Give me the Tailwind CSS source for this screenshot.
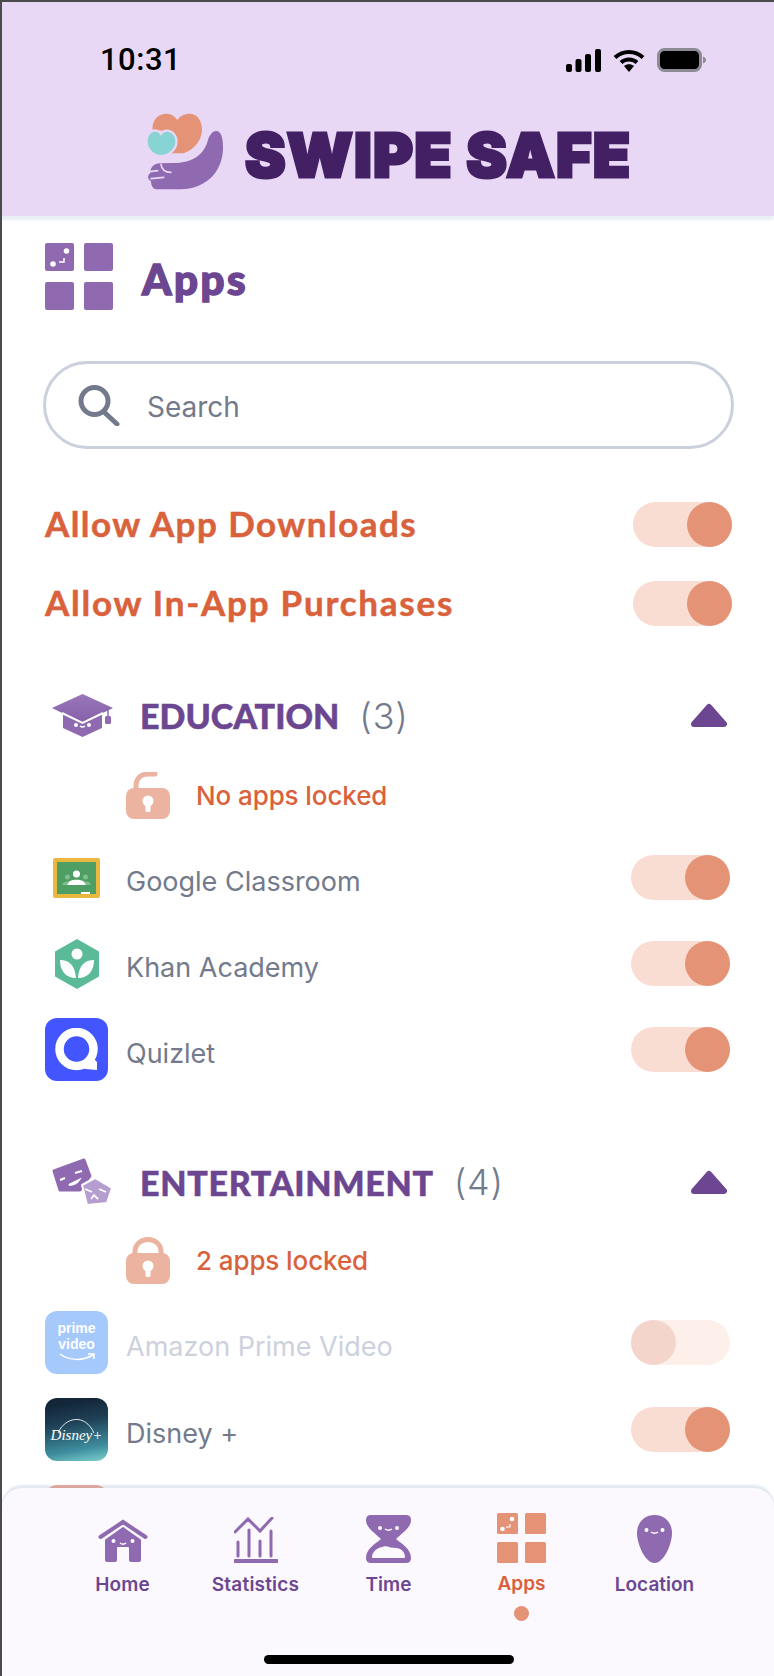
<!DOCTYPE html>
<html lang="en">
<head>
<meta charset="utf-8">
<title>Swipe Safe – Apps</title>
<script src="https://cdn.jsdelivr.net/npm/@tailwindcss/browser@4"></script>
</head>
<body class="bg-white">
<div class="relative w-[774px] h-[1676px] overflow-hidden bg-white border-l-2 border-t-2 border-[#4b4b4b] [font-family:Inter,sans-serif]">

  <!-- Header -->
  <header class="relative z-10 -ml-[2px] h-[214px] bg-[#E8D8F5] shadow-[0_4px_3px_#e9eff5] pl-[2px]">
    <div class="flex items-center justify-between pt-[44px] pl-[98px] pr-[68px] h-[72px]">
      <span class="text-[31px] leading-[28px] font-medium tracking-[0.5px] text-black [font-family:Roboto,sans-serif]">10:31</span>
      <div class="flex items-center gap-[12px]">
        <svg width="35" height="23" viewBox="0 0 35 23"><rect x="0" y="15" width="6" height="8" rx="2"/><rect x="9.500" y="10" width="6" height="13" rx="2"/><rect x="19" y="5" width="6" height="18" rx="2"/><rect x="29" y="0" width="6" height="23" rx="2"/></svg>
        <svg width="32" height="23" viewBox="0 0 32 23" fill="none" stroke="#000" stroke-width="4"><path d="M2 8.500C10 1 22 1 30 8.500"/><path d="M8 13.500C12.500 9.500 19.500 9.500 24 13.500"/><path d="M16 23l-5-6c3-2.500 7-2.500 10 0z" fill="#000" stroke="none"/></svg>
        <svg width="49" height="24" viewBox="0 0 49 24"><rect x="1.500" y="1.500" width="42" height="21" rx="6" fill="#000" stroke="#8c8a93" stroke-width="3"/><path d="M46 8.500c2 .8 3 2 3 3.500s-1 2.700-3 3.500z" fill="#8c8a93"/></svg>
      </div>
    </div>
    <div class="flex items-start pt-[39px] pl-[145px]">
      <svg width="78" height="78" viewBox="50 36 234 234">
        <path d="M66 85C66 55 85 38 108 38C122 38 134 46 141 57C148 46 162 38 178 38C200 38 215 58 215 85C215 115 195 145 160 157L120 157L100 90Z" fill="#E59377"/>
        <path d="M92 104C97 95 106 91 115 93C127 96 135 107 135 122C135 145 110 162 92 162C74 162 52 145 52 122C52 107 58 96 70 93C79 91 87 95 92 104Z" fill="#88D4D4" stroke="#E8D8F5" stroke-width="14" paint-order="stroke"/>
        <path d="M232 120C236 105 245 90 258 90C272 90 278 110 278 140C278 200 240 262 150 265L80 265C68 265 62 255 62 240C52 235 50 225 60 215C60 200 70 187 90 187L130 186C180 186 220 165 232 120Z" fill="#8F6AB0"/>
        <path d="M92 190C94 205 105 214 122 214M62 233L100 229M58 212L82 209" fill="none" stroke="#E8D8F5" stroke-width="5" stroke-linecap="round"/>
      </svg>
      <span class="ml-[20px] mt-[12px] text-[61px] leading-[60px] font-black tracking-[1.2px] text-[#432063] [font-family:Inter,sans-serif] [-webkit-text-stroke:3px_#432063] whitespace-nowrap">SWIPE SAFE</span>
    </div>
  </header>

  <!-- Content -->
  <main class="pl-[43px]">
    <div class="flex items-center gap-[29px] pt-[27px] h-[94px]">
      <svg width="68" height="67" viewBox="0 0 68 67" fill="#8F6AB0">
        <rect x="0" y="0" width="29" height="28" rx="2"/><rect x="39" y="0" width="29" height="28" rx="2"/><rect x="0" y="39" width="29" height="28" rx="2"/><rect x="39" y="39" width="29" height="28" rx="2"/>
        <circle cx="21.500" cy="8" r="2.800" fill="#fff"/><circle cx="8" cy="21" r="2.800" fill="#fff"/><path d="M19 15v4h-5" fill="none" stroke="#fff" stroke-width="1.500"/>
      </svg>
      <h1 class="text-[42px] leading-[40px] font-black tracking-[2.5px] text-[#6C4691] [font-family:Lato,sans-serif] [-webkit-text-stroke:1.5px_#6C4691] mt-[4px]">Apps</h1>
    </div>

    <div class="mt-[51px] -ml-[2px] w-[691px] h-[88px] rounded-full border-[3px] border-[#CBD0DD] flex items-center pl-[32px] bg-white">
      <svg width="42" height="41" viewBox="0 0 42 41" fill="none" stroke="#737A8C" stroke-width="5" stroke-linecap="round"><circle cx="16.500" cy="16" r="13.500"/><path d="M26 27l13 12"/></svg>
      <span class="ml-[27px] mt-[4px] text-[28px] text-[#737A8C]">Search</span>
    </div>

    <div class="mt-[53px] flex flex-col gap-[34px] pr-[44px] w-[731px]">
      <div class="flex items-center justify-between h-[45px]">
        <span class="-mt-[3px] text-[35px] font-bold text-[#D9623C] [font-family:Lato,sans-serif] tracking-[1.45px] [-webkit-text-stroke:0.5px_#D9623C]">Allow App Downloads</span>
        <div class="w-[99px] h-[45px] rounded-full bg-[#FADDD2] flex justify-end"><div class="w-[45px] h-[45px] rounded-full bg-[#E59377]"></div></div>
      </div>
      <div class="flex items-center justify-between h-[45px]">
        <span class="-mt-[3px] text-[35px] font-bold text-[#D9623C] [font-family:Lato,sans-serif] tracking-[1.75px] [-webkit-text-stroke:0.5px_#D9623C]">Allow In-App Purchases</span>
        <div class="w-[99px] h-[45px] rounded-full bg-[#FADDD2] flex justify-end"><div class="w-[45px] h-[45px] rounded-full bg-[#E59377]"></div></div>
      </div>
    </div>

    <!-- Education -->
    <section class="mt-[68px]">
      <div class="flex items-center h-[43px] pl-[7px] w-[683px]">
        <svg width="61" height="43" viewBox="0 0 61 43">
          <defs><linearGradient id="g1" x1="0" y1="0" x2="0" y2="1"><stop offset="0" stop-color="#9A76BA"/><stop offset="1" stop-color="#8560A8"/></linearGradient></defs>
          <path d="M11 21v13l19.500 9L50 34V21z" fill="#8F6AB0"/>
          <path d="M30.500 0L61 14 30.500 29 0 14z" fill="url(#g1)"/>
          <path d="M10 19l20.500 10L51 19" fill="none" stroke="#fff" stroke-width="2"/>
          <rect x="53" y="22" width="6" height="8" rx="1.500" fill="#8F6AB0"/><path d="M56 14v8" stroke="#8F6AB0" stroke-width="1.500"/>
          <circle cx="24" cy="31" r="2" fill="#fff"/><circle cx="37" cy="31" r="2" fill="#fff"/><path d="M28 32q2.500 2 5 0" fill="none" stroke="#fff" stroke-width="1.500"/>
        </svg>
        <span class="ml-[27px] text-[34px] font-black text-[#6C4691] [font-family:Lato,sans-serif] [-webkit-text-stroke:0.5px_#6C4691]">EDUCATION</span>
        <span class="ml-[20px] text-[36px] font-light tracking-[0.8px] text-[#737A8C]">(3)</span>
        <svg class="ml-auto" width="38" height="25" viewBox="0 0 38 25"><path d="M19 4L34 21H4z" fill="#6C4691" stroke="#6C4691" stroke-width="6" stroke-linejoin="round"/></svg>
      </div>
      <div class="flex items-center mt-[35px] pl-[81px] h-[47px]">
        <svg width="44" height="47" viewBox="0 0 44 47">
          <path d="M10 20v-6C10 6 15 2 22 2h7" fill="none" stroke="#EBB3A0" stroke-width="5" stroke-linecap="round"/>
          <path d="M8 16h28a8 8 0 0 1 8 8v15a8 8 0 0 1-8 8H8a8 8 0 0 1-8-8V24a8 8 0 0 1 8-8z" fill="#EBB3A0"/>
          <circle cx="22" cy="29" r="5.500" fill="#fff"/><rect x="19.500" y="30" width="5" height="10" rx="1.500" fill="#fff"/>
        </svg>
        <span class="ml-[26px] -mt-[1px] text-[26px] font-medium tracking-[-0.1px] text-[#D9623C]">No apps locked</span>
      </div>

      <div class="mt-[27px] flex flex-col gap-[23px] w-[685px]">
        <div class="flex items-center h-[63px]">
          <div class="w-[63px] flex justify-center">
            <svg width="47" height="40" viewBox="0 0 47 40">
              <rect width="47" height="40" rx="2" fill="#EBB83F"/><rect x="4" y="4" width="39" height="32" fill="#4F9F64"/>
              <circle cx="23.500" cy="16" r="3.500" fill="#fff"/><path d="M14 27c0-7 19-7 19 0z" fill="#fff"/>
              <circle cx="14.500" cy="19" r="2.500" fill="#7FBF8F"/><circle cx="32.500" cy="19" r="2.500" fill="#7FBF8F"/>
              <path d="M9 27c1-4 6-4 7-3l-2 3zM38 27c-1-4-6-4-7-3l2 3z" fill="#7FBF8F"/><rect x="28" y="34" width="9" height="2" fill="#fff"/>
            </svg>
          </div>
          <span class="ml-[18px] mt-[9px] text-[27px] text-[#737A8C]">Google Classroom</span>
          <div class="ml-auto w-[99px] h-[45px] rounded-full bg-[#FADDD2] flex justify-end"><div class="w-[45px] h-[45px] rounded-full bg-[#E59377]"></div></div>
        </div>
        <div class="flex items-center h-[63px]">
          <div class="w-[63px] flex justify-center">
            <svg width="44" height="50" viewBox="0 0 44 50">
              <path d="M22 0L44 12.500v25L22 50 0 37.500v-25z" fill="#5BBB99"/>
              <circle cx="22" cy="15" r="5.500" fill="#fff"/>
              <path d="M5 21c9 0 15 5 16 18C11 39 5 32 5 21zM39 21c-9 0-15 5-16 18 10 0 16-7 16-18z" fill="#fff"/>
            </svg>
          </div>
          <span class="ml-[18px] mt-[9px] text-[27px] text-[#737A8C]">Khan Academy</span>
          <div class="ml-auto w-[99px] h-[45px] rounded-full bg-[#FADDD2] flex justify-end"><div class="w-[45px] h-[45px] rounded-full bg-[#E59377]"></div></div>
        </div>
        <div class="flex items-center h-[63px]">
          <div class="w-[63px] h-[63px] rounded-[12px] bg-[#4255FF] flex items-center justify-center">
            <svg width="44" height="44" viewBox="0 0 44 44"><circle cx="21.500" cy="21" r="17" fill="none" stroke="#fff" stroke-width="8.500"/><path d="M32 35l6-5 4 4v8l-12-1z" fill="#fff"/></svg>
          </div>
          <span class="ml-[18px] mt-[9px] text-[27px] text-[#737A8C]">Quizlet</span>
          <div class="ml-auto w-[99px] h-[45px] rounded-full bg-[#FADDD2] flex justify-end"><div class="w-[45px] h-[45px] rounded-full bg-[#E59377]"></div></div>
        </div>
      </div>
    </section>

    <!-- Entertainment -->
    <section class="mt-[77px]">
      <div class="flex items-center h-[48px] pl-[7px] w-[683px]">
        <svg width="61" height="48" viewBox="0 0 61 48">
          <path d="M2 13L32 2l6 16-10 14H8z" fill="#8F6AB0" stroke="#8F6AB0" stroke-width="3" stroke-linejoin="round"/>
          <path d="M30 27L43 20l17 10-5 15-20 2z" fill="#B59DCF" stroke="#fff" stroke-width="2" stroke-linejoin="round"/>
          <path d="M8 22l5-2M23 15l7-2M17 27c4 0 8-2 10-5z" fill="none" stroke="#fff" stroke-width="2"/>
          <path d="M33 31l7 3M47 31l7 3M39 41l3-4 4 4" fill="none" stroke="#fff" stroke-width="1.800"/>
        </svg>
        <span class="ml-[27px] text-[34px] font-black tracking-[0.7px] text-[#6C4691] [font-family:Lato,sans-serif] [-webkit-text-stroke:0.5px_#6C4691]">ENTERTAINMENT</span>
        <span class="ml-[20px] text-[36px] font-light tracking-[0.8px] text-[#737A8C]">(4)</span>
        <svg class="ml-auto" width="38" height="25" viewBox="0 0 38 25"><path d="M19 4L34 21H4z" fill="#6C4691" stroke="#6C4691" stroke-width="6" stroke-linejoin="round"/></svg>
      </div>
      <div class="flex items-center mt-[31px] pl-[81px] h-[47px]">
        <svg width="44" height="47" viewBox="0 0 44 47">
          <path d="M9 20v-5C9 7 15 2.500 22 2.500S35 7 35 15v5" fill="none" stroke="#EBB3A0" stroke-width="5"/>
          <path d="M8 16h28a8 8 0 0 1 8 8v15a8 8 0 0 1-8 8H8a8 8 0 0 1-8-8V24a8 8 0 0 1 8-8z" fill="#EBB3A0"/>
          <circle cx="22" cy="29" r="5.500" fill="#fff"/><rect x="19.500" y="30" width="5" height="10" rx="1.500" fill="#fff"/>
        </svg>
        <span class="ml-[26px] -mt-[1px] text-[26px] font-medium tracking-[-0.1px] text-[#D9623C]">2 apps locked</span>
      </div>

      <div class="mt-[27px] flex flex-col gap-[24px] w-[685px]">
        <div class="flex items-center h-[63px]">
          <div class="relative w-[63px] h-[63px] rounded-[12px] bg-[#A6C9FC] flex flex-col items-center pt-[9px] text-white font-bold text-[14px] leading-[16px] [font-family:'Liberation_Sans',sans-serif]">
            <span>prime</span><span>video</span>
            <svg class="mt-[1px]" width="36" height="9" viewBox="0 0 36 9" fill="none" stroke="#fff" stroke-width="1.500"><path d="M1 1c9 7 23 7 33 1"/><path d="M29 1h6v5"/></svg>
          </div>
          <span class="ml-[18px] mt-[9px] text-[27px] text-[#CDD1DD]">Amazon Prime Video</span>
          <div class="ml-auto w-[99px] h-[45px] rounded-full bg-[#FDF0EB]"><div class="w-[45px] h-[45px] rounded-full bg-[#F4D5CB]"></div></div>
        </div>
        <div class="flex items-center h-[63px]">
          <div class="relative w-[63px] h-[63px] rounded-[12px] overflow-hidden bg-[linear-gradient(170deg,#13263A_12%,#1F4156_40%,#3E8E9F_78%,#7FD0D0_100%)] flex items-center justify-center">
            <svg class="absolute left-[10px] top-[17px]" width="42" height="20" viewBox="0 0 42 20" fill="none" stroke="#dfe9ee" stroke-width="1"><path d="M3 18C10 2 30 -2 39 18"/></svg>
            <span class="mt-[10px] text-white text-[15px] leading-[16px] italic [font-family:'Liberation_Serif',serif]">Disney+</span>
          </div>
          <span class="ml-[18px] mt-[9px] text-[27px] text-[#737A8C]">Disney +</span>
          <div class="ml-auto w-[99px] h-[45px] rounded-full bg-[#FADDD2] flex justify-end"><div class="w-[45px] h-[45px] rounded-full bg-[#E59377]"></div></div>
        </div>
        <div class="w-[63px] h-[63px] rounded-[12px] bg-[#F5B09E]"></div>
      </div>
    </section>
  </main>

  <!-- Bottom nav -->
  <nav class="absolute left-0 right-0 bottom-0 h-[188px] rounded-t-[20px] bg-[#FBF8FE] shadow-[0_-3px_2px_rgba(100,130,170,0.18)]">
    <div class="grid grid-cols-[repeat(5,133px)] pl-[54px] pt-[25px]">
      <div class="flex flex-col items-center">
        <div class="h-[50px] flex items-end">
          <svg width="50" height="44" viewBox="0 0 50 44">
            <path d="M7 17L25 5l18 12v24a2 2 0 0 1-2 2H33a2 2 0 0 1-2-2V29a1 1 0 0 0-1-1H20a1 1 0 0 0-1 1v12a2 2 0 0 1-2 2H9a2 2 0 0 1-2-2z" fill="#8F6AB0"/>
            <path d="M2.500 19L25 3l22.500 16" fill="none" stroke="#FBF8FE" stroke-width="8"/>
            <path d="M2.500 18L25 3l22.500 15" fill="none" stroke="#8F6AB0" stroke-width="4" stroke-linecap="round"/>
            <circle cx="15.500" cy="22" r="2" fill="#fff"/><circle cx="34.500" cy="22" r="2" fill="#fff"/><path d="M22 24q3 2.500 6 0" fill="none" stroke="#fff" stroke-width="1.500"/>
          </svg>
        </div>
        <span class="mt-[10px] text-[19px] leading-[24px] font-semibold tracking-[0.1px] text-[#6C4691]">Home</span>
      </div>
      <div class="flex flex-col items-center">
        <div class="h-[50px] flex items-end">
          <svg width="44" height="46" viewBox="0 0 44 46" fill="none" stroke="#8F6AB0" stroke-linecap="round">
            <path d="M1 15L14 2l12 12L38 1" stroke-width="3"/>
            <path d="M4 25v14M15 13v26M26 24v15M37 14v25" stroke-width="3"/>
            <path d="M1 44h42" stroke-width="4"/>
          </svg>
        </div>
        <span class="mt-[10px] text-[19px] leading-[24px] font-semibold tracking-[0.2px] text-[#6C4691]">Statistics</span>
      </div>
      <div class="flex flex-col items-center">
        <div class="h-[50px] flex items-end">
          <svg width="45" height="48" viewBox="0 0 45 48">
            <path d="M5 0h35q5 0 5 5c0 8-9 13-15 19 6 5 15 10 15 19q0 5-5 5H5q-5 0-5-5c0-9 9-14 15-19C9 18 0 13 0 5q0-5 5-5z" fill="#8F6AB0"/>
            <path d="M6 42c0-5 5-9 10-10 5-2 6 1 14 1 5 0 9 4 9 9 0 1-1 1-2 1H8c-1 0-2 0-2-1z" fill="#FBF8FE"/>
            <circle cx="14" cy="13" r="2" fill="#fff"/><circle cx="31" cy="13" r="2" fill="#fff"/><path d="M19 14q3.500 2.500 7 0" fill="none" stroke="#fff" stroke-width="1.500"/>
          </svg>
        </div>
        <span class="mt-[10px] text-[19px] leading-[24px] font-semibold text-[#6C4691]">Time</span>
      </div>
      <div class="flex flex-col items-center">
        <div class="h-[50px] flex items-end">
          <svg width="49" height="50" viewBox="0 0 49 50" fill="#E59377">
            <rect x="0" y="0" width="21" height="21" rx="1.500"/><rect x="28" y="0" width="21" height="21" rx="1.500"/><rect x="0" y="29" width="21" height="21" rx="1.500"/><rect x="28" y="29" width="21" height="21" rx="1.500"/>
            <circle cx="15" cy="6" r="2.300" fill="#fff"/><circle cx="5.500" cy="16" r="2.300" fill="#fff"/><path d="M13 11v3h-4" fill="none" stroke="#fff" stroke-width="1.200"/>
          </svg>
        </div>
        <span class="mt-[9px] text-[19px] leading-[24px] font-semibold text-[#D9623C]">Apps</span>
        <span class="mt-[10px] w-[15px] h-[15px] rounded-full bg-[#E59377]"></span>
      </div>
      <div class="flex flex-col items-center">
        <div class="h-[50px] flex items-end">
          <svg width="35" height="48" viewBox="0 0 35 48">
            <path d="M17.500 0C28 0 35 8 35 18c0 11-8 30-17.500 30S0 29 0 18C0 8 7 0 17.500 0z" fill="#8F6AB0"/>
            <circle cx="9.500" cy="15" r="2" fill="#fff"/><circle cx="25.500" cy="15" r="2" fill="#fff"/><path d="M14 17q3.500 2.500 7 0" fill="none" stroke="#fff" stroke-width="1.500"/>
          </svg>
        </div>
        <span class="mt-[10px] text-[19px] leading-[24px] font-semibold text-[#6C4691]">Location</span>
      </div>
    </div>
    <div class="absolute left-[262px] bottom-[12px] w-[250px] h-[9px] rounded-full bg-black"></div>
  </nav>
</div>
</body>
</html>
